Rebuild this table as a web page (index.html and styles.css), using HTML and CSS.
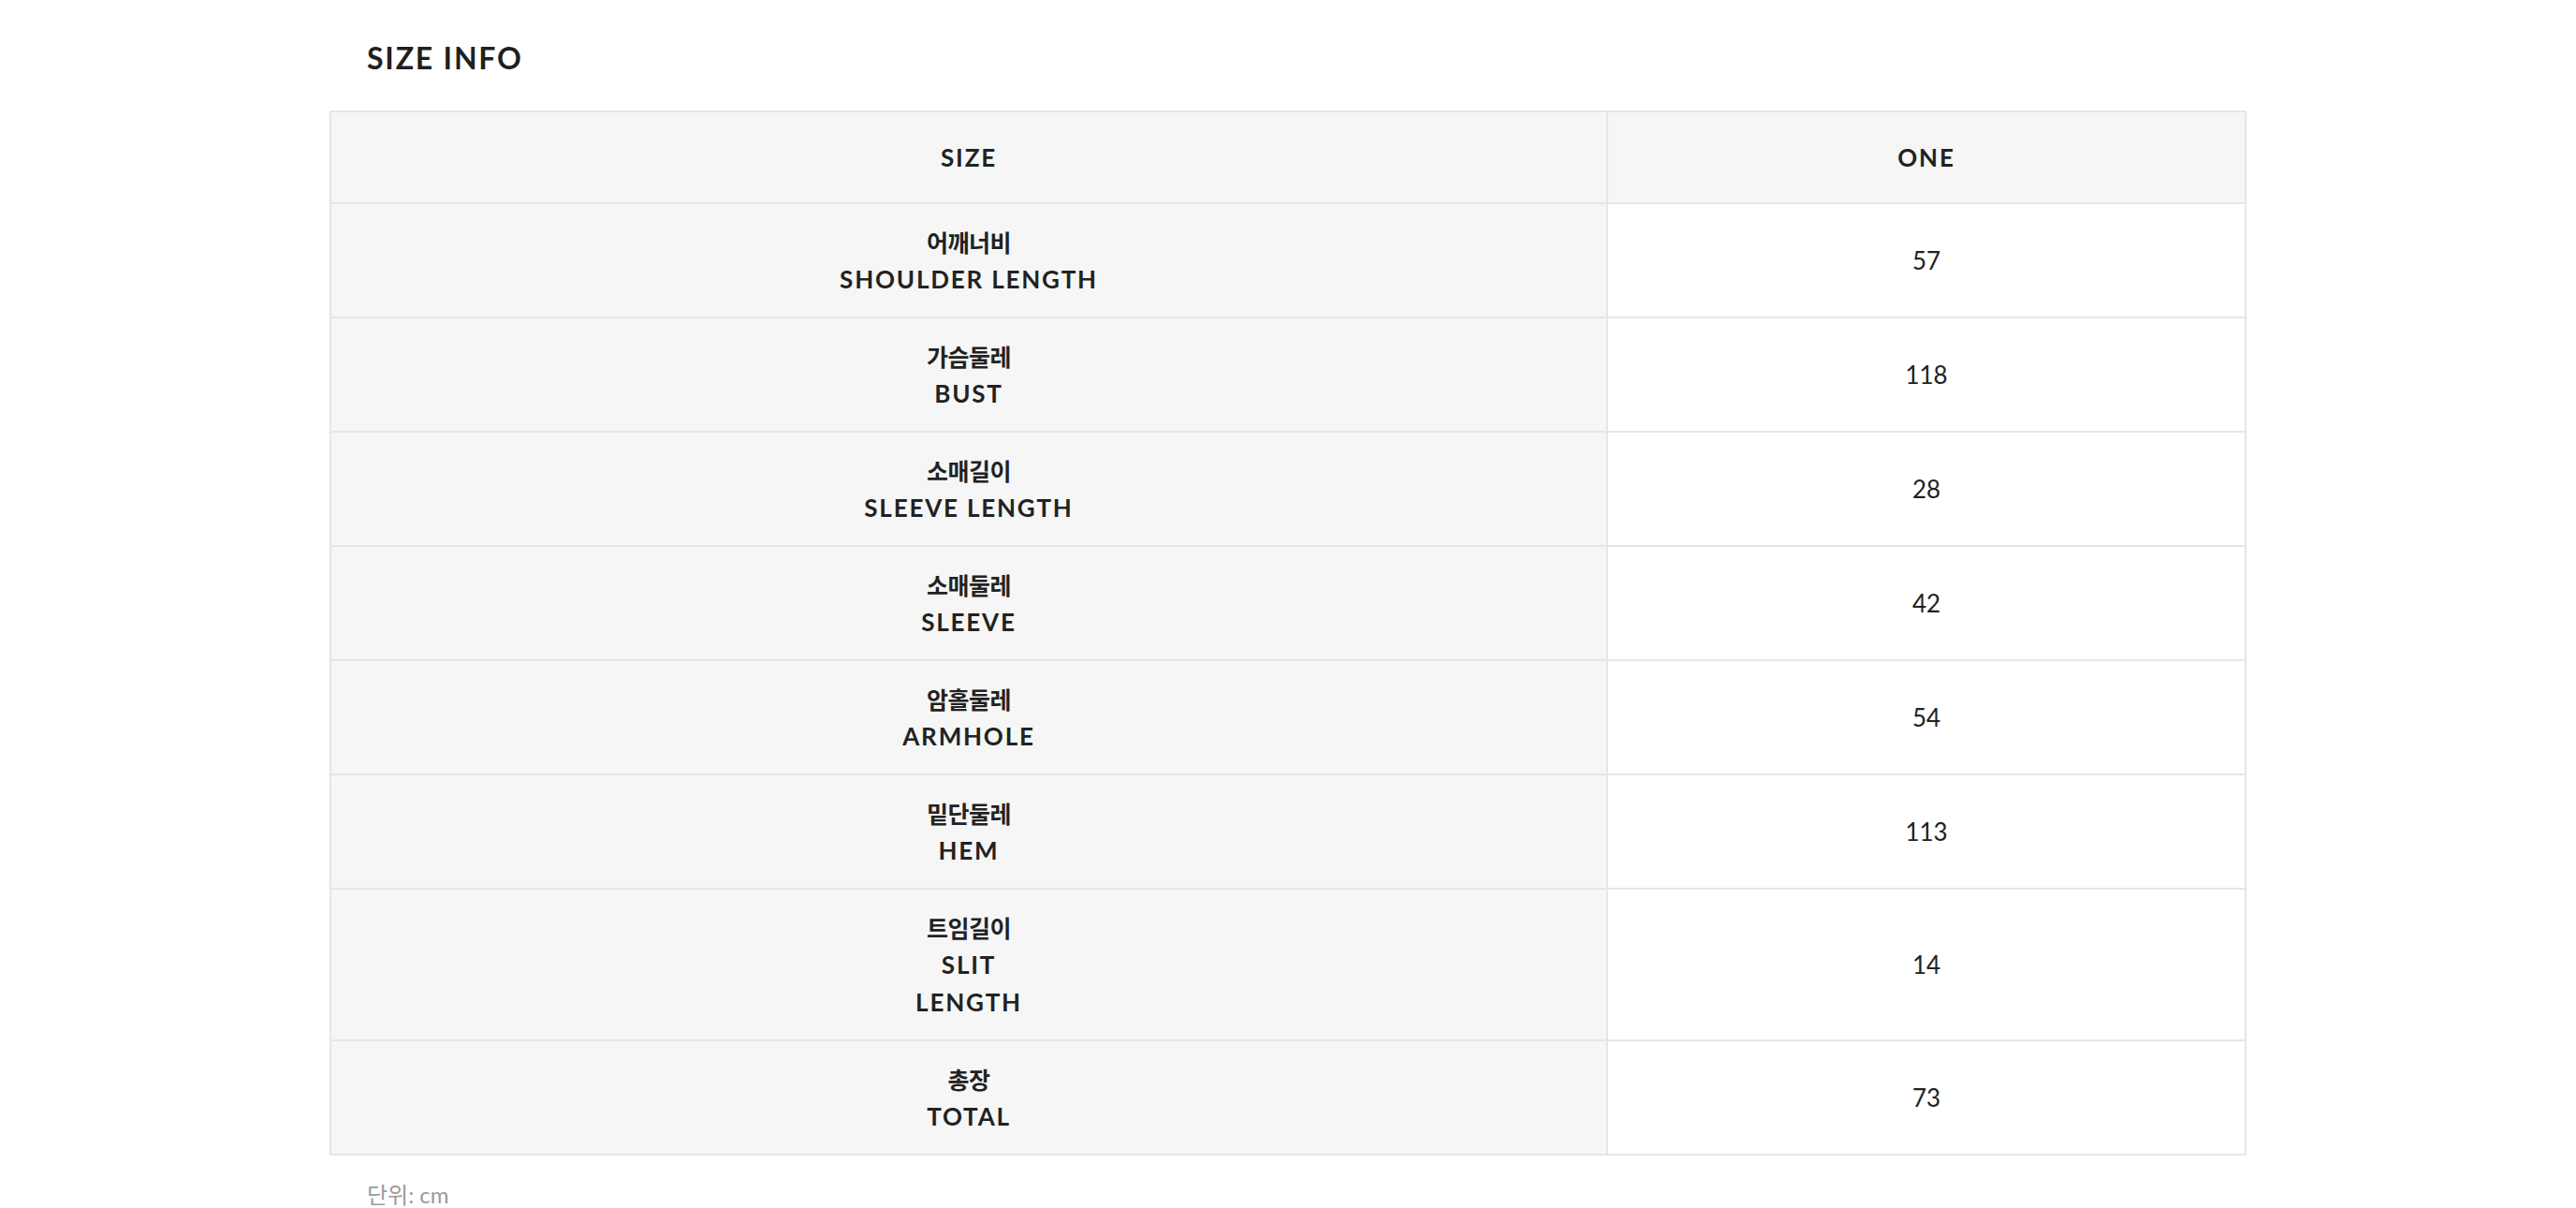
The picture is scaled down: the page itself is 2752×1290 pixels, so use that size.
FILE: index.html
```html
<!DOCTYPE html>
<html lang="ko">
<head>
<meta charset="utf-8">
<title>SIZE INFO</title>
<link rel="stylesheet" href="styles.css">
</head>
<body>
<div class="size-info">
  <h2 class="size-title">SIZE INFO</h2>
  <table class="size-table">
    <colgroup>
      <col class="col-label">
      <col class="col-value">
    </colgroup>
    <thead>
      <tr><th><span class="line">SIZE</span></th><th><span class="line">ONE</span></th></tr>
    </thead>
    <tbody>
      <tr><th><span class="line ko">어깨너비</span><span class="line">SHOULDER LENGTH</span></th><td>57</td></tr>
      <tr><th><span class="line ko">가슴둘레</span><span class="line">BUST</span></th><td>118</td></tr>
      <tr><th><span class="line ko">소매길이</span><span class="line">SLEEVE LENGTH</span></th><td>28</td></tr>
      <tr><th><span class="line ko">소매둘레</span><span class="line">SLEEVE</span></th><td>42</td></tr>
      <tr><th><span class="line ko">암홀둘레</span><span class="line">ARMHOLE</span></th><td>54</td></tr>
      <tr><th><span class="line ko">밑단둘레</span><span class="line">HEM</span></th><td>113</td></tr>
      <tr><th><span class="line ko">트임길이</span><span class="line">SLIT</span><span class="line">LENGTH</span></th><td>14</td></tr>
      <tr><th><span class="line ko">총장</span><span class="line">TOTAL</span></th><td>73</td></tr>
    </tbody>
  </table>
  <p class="size-unit">단위: cm</p>
</div>
</body>
</html>
```

FILE: styles.css
```css
html, body {
  margin: 0;
  padding: 0;
  background: #ffffff;
}

body {
  font-family: Lato, "Noto Sans CJK KR", sans-serif;
  color: #222222;
}

.size-info {
  width: 2048px;
  margin: 0 auto;
  padding-top: 42px;
}

.size-title {
  margin: 0 0 36px 0;
  padding-left: 40px;
  font-size: 32px;
  line-height: 40px;
  font-weight: 700;
  letter-spacing: 1.8px;
  color: #1f1f1f;
}

.size-table {
  width: 100%;
  border-collapse: collapse;
  table-layout: fixed;
  border: 2px solid #e6e6e6;
}

.col-label {
  width: 66.667%;
}

.col-value {
  width: 33.333%;
}

.size-table th,
.size-table td {
  border: 2px solid #e6e6e6;
  text-align: center;
  vertical-align: middle;
  font-size: 26px;
  line-height: 40px;
  height: 40px;
  padding: 20px 10px;
  color: #222222;
}

.size-table thead th {
  background: #f6f6f6;
  font-weight: 700;
  padding: 28px 10px;
}

.size-table tbody th {
  background: #f6f6f6;
  font-weight: 700;
}

.size-table tbody td {
  background: #ffffff;
  font-weight: 400;
}

.line {
  display: block;
  height: 40px;
  line-height: 40px;
  letter-spacing: 1.8px;
  overflow: hidden;
}

.line.ko {
  font-family: "Noto Sans CJK KR", sans-serif;
  font-size: 25px;
  font-weight: 700;
  letter-spacing: -0.5px;
}

.size-unit {
  margin: 24px 0 0 0;
  padding-left: 40px;
  font-size: 24px;
  line-height: 36px;
  color: #9a9a9a;
}
```
